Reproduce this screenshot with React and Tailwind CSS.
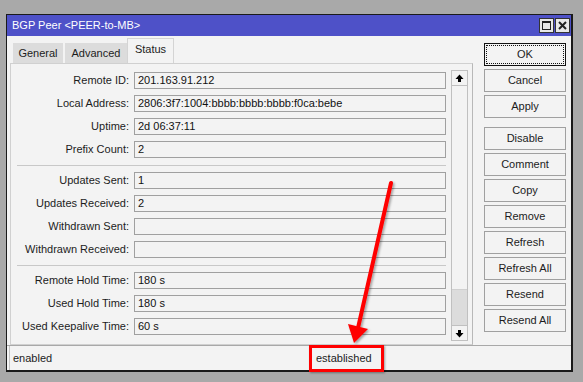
import React from "react";

const groups = [
  [
    ["Remote ID:", "201.163.91.212"],
    ["Local Address:", "2806:3f7:1004:bbbb:bbbb:bbbb:f0ca:bebe"],
    ["Uptime:", "2d 06:37:11"],
    ["Prefix Count:", "2"],
  ],
  [
    ["Updates Sent:", "1"],
    ["Updates Received:", "2"],
    ["Withdrawn Sent:", ""],
    ["Withdrawn Received:", ""],
  ],
  [
    ["Remote Hold Time:", "180 s"],
    ["Used Hold Time:", "180 s"],
    ["Used Keepalive Time:", "60 s"],
  ],
];

function Row({ label, value }) {
  return (
    <div className="flex items-center gap-[5px] h-[17px]">
      <div className="w-[112px] text-right whitespace-nowrap leading-none">{label}</div>
      <div className="w-[312px] h-[17px] border border-[#a0a0a0] bg-[#f3f3f3] pl-[3px] flex items-center leading-none whitespace-nowrap text-[#111]">
        {value}
      </div>
    </div>
  );
}

function Btn({ children, extra = "" }) {
  return (
    <div
      className={
        "w-[82px] h-[23px] border border-[#a0a0a0] bg-[#f3f3f3] flex items-center justify-center leading-none " +
        extra
      }
    >
      {children}
    </div>
  );
}

function ArrowUp() {
  return (
    <svg width="9" height="9" viewBox="0 0 9 9">
      <polygon points="4.5,0.5 8.5,5 0.5,5" fill="#000" />
      <rect x="3" y="5" width="3" height="3" fill="#000" />
    </svg>
  );
}
function ArrowDown() {
  return (
    <svg width="9" height="9" viewBox="0 0 9 9">
      <rect x="3" y="1" width="3" height="3" fill="#000" />
      <polygon points="0.5,4 8.5,4 4.5,8.5" fill="#000" />
    </svg>
  );
}

export default function App() {
  return (
    <div
      className="relative w-[583px] h-[382px] overflow-hidden bg-[#a9a9a9] pl-[6px] pt-[14px] text-[11px] text-[#1c1c1c]"
      style={{ fontFamily: '"Liberation Sans", Arial, sans-serif' }}
    >
      <div className="w-[567px] h-[358px] border-l border-t border-r-2 border-b-2 border-[#1a1a1a] bg-[#f3f3f3] flex flex-col">
        {/* title bar */}
        <div className="h-[21px] bg-[#4e51c8] flex items-center pl-[5px] pr-[1px] shrink-0">
          <div className="text-white text-[11px] leading-none flex-1 whitespace-nowrap">BGP Peer &lt;PEER-to-MB&gt;</div>
          <div className="flex gap-[1px]">
            <div className="w-[15px] h-[15px] border border-[#333] bg-[#e8e8e8] flex items-center justify-center">
              <div className="w-[9px] h-[9px] border border-[#222] border-t-2"></div>
            </div>
            <div className="w-[15px] h-[15px] border border-[#333] bg-[#e8e8e8] flex items-center justify-center">
              <svg width="9" height="9" viewBox="0 0 9 9">
                <path d="M1 1 L8 8 M8 1 L1 8" stroke="#222" strokeWidth="2" />
              </svg>
            </div>
          </div>
        </div>

        {/* main */}
        <div className="flex h-[309px] shrink-0">
          {/* left */}
          <div className="w-[466px] pl-[3px] flex flex-col">
            <div className="h-[27px] flex items-end pl-[3px]">
              <div className="w-[50px] h-[20px] bg-[#dcdcdc] flex items-center justify-center leading-none">General</div>
              <div className="w-[2px] h-[20px] bg-[#f3f3f3]"></div>
              <div className="w-[62px] h-[20px] bg-[#dcdcdc] flex items-center justify-center leading-none">Advanced</div>
              <div className="w-[47px] h-[25px] bg-[#f3f3f3] border-l border-t border-r border-[#d4d4d4] flex items-center justify-center leading-none pb-[3px]">
                Status
              </div>
            </div>
            <div className="w-[463px] h-[282px] border border-[#d0d0d0] border-r-[#b8b8b8] flex pl-[6px] pt-[6px]">
              <div className="w-[429px] pt-[2px] flex flex-col gap-[6px]">
                {groups.map((g, gi) => (
                  <React.Fragment key={gi}>
                    {gi > 0 && <div className="h-[1px] mt-[1px] w-[429px] bg-[#c8c8c8]"></div>}
                    {g.map(([l, v]) => (
                      <Row key={l} label={l} value={v} />
                    ))}
                  </React.Fragment>
                ))}
              </div>
              {/* scrollbar */}
              <div className="ml-[5px] w-[17px] h-[271px] border border-[#c0c0c0] flex flex-col">
                <div className="h-[15px] border-b border-[#c0c0c0] bg-[#f3f3f3] flex items-center justify-center">
                  <ArrowUp />
                </div>
                <div className="flex-1 bg-[#f3f3f3]"></div>
                <div className="h-[36px] bg-[#dcdcdc] border-t border-[#d0d0d0]"></div>
                <div className="h-[15px] border-t border-[#c0c0c0] bg-[#f3f3f3] flex items-center justify-center">
                  <ArrowDown />
                </div>
              </div>
            </div>
          </div>
          {/* right buttons */}
          <div className="w-[98px] pl-[11px] pt-[7px] flex flex-col gap-[3px]">
            <div className="w-[82px] h-[23px] border border-[#111] bg-[#f3f3f3] p-[1px]">
              <div className="w-full h-full border border-dotted border-[#111] flex items-center justify-center leading-none">
                OK
              </div>
            </div>
            <Btn>Cancel</Btn>
            <Btn>Apply</Btn>
            <Btn extra="mt-[6px]">Disable</Btn>
            <Btn>Comment</Btn>
            <Btn>Copy</Btn>
            <Btn>Remove</Btn>
            <Btn>Refresh</Btn>
            <Btn>Refresh All</Btn>
            <Btn>Resend</Btn>
            <Btn>Resend All</Btn>
          </div>
        </div>

        {/* status bar */}
        <div className="flex-1 border-t border-[#a8a8a8] flex pl-[2px] pr-[1px]">
          <div className="w-[298px] h-[24px] border-l border-[#c4c4c4] pl-[3px] flex items-center leading-none">enabled</div>
          <div className="relative z-10 -mt-[1px] ml-[2px] w-[75px] h-[27px] border-[3px] border-[#ff0000] shadow-[1px_1px_2px_rgba(0,0,0,0.35)] flex items-center pl-[4px] leading-none bg-[#f3f3f3]">
            established
          </div>
          <div className="flex-1"></div>
        </div>
      </div>

      {/* annotation arrow */}
      <svg className="absolute left-0 top-0 pointer-events-none" width="583" height="382" viewBox="0 0 583 382">
        <defs>
          <filter id="sh" x="-20%" y="-20%" width="140%" height="140%">
            <feDropShadow dx="1.5" dy="1.5" stdDeviation="1" floodColor="#000" floodOpacity="0.35" />
          </filter>
        </defs>
        <g filter="url(#sh)">
          <line x1="391" y1="183" x2="358" y2="328" stroke="#ff0000" strokeWidth="4" strokeLinecap="round" />
          <polygon points="354,343 348,324 368,329" fill="#ff0000" />
        </g>
      </svg>
    </div>
  );
}
